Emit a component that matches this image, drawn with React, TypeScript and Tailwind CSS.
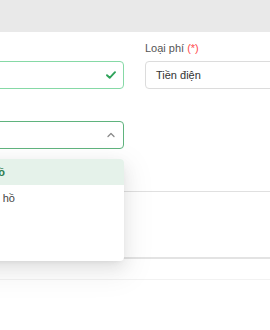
import React from "react";

export default function App() {
  return (
    <div className="w-[270px] h-[330px] overflow-hidden bg-white relative" style={{ fontFamily: '"Liberation Sans", Arial, sans-serif' }}>
      <div className="h-[32px] bg-[#e9e9e9]" />
      <div className="w-[470px] -ml-[68px] pt-[8px]">
        <div className="grid grid-cols-[192px_192px] gap-x-[21px]">
          <div>
            <div className="h-[16px] mb-[5px] flex items-center text-[11px] text-[#555]">
              Số hộ <span className="text-[#ff4d4f] ml-[3px]">(*)</span>
            </div>
            <div className="h-[28px] rounded-[4px] border border-[#86d9a6] bg-white flex items-center justify-between pl-[11px] pr-[7px]">
              <span className="text-[11px] text-[#333]">1</span>
              <svg width="10" height="8" viewBox="0 0 10 8" fill="none">
                <path d="M1 4.2L3.7 6.8L9 1.2" stroke="#2fa35a" strokeWidth="1.9" strokeLinecap="round" strokeLinejoin="round" />
              </svg>
            </div>
          </div>
          <div>
            <div className="h-[16px] mb-[5px] flex items-center text-[11px] text-[#555]">
              Loại phí <span className="text-[#ff4d4f] ml-[3px]">(*)</span>
            </div>
            <div className="h-[28px] rounded-[4px] border border-[#dcdcdc] bg-white flex items-center pl-[10px]">
              <span className="text-[11px] text-[#333]">Tiền điện</span>
            </div>
          </div>
        </div>

        <div className="grid grid-cols-[192px_192px] gap-x-[21px] mt-[11px]">
          <div className="relative">
            <div className="h-[16px] mb-[5px] flex items-center text-[11px] text-[#555]">Đồng hồ</div>
            <div className="h-[28px] rounded-[4px] border border-[#5fb37d] bg-white flex items-center justify-end pr-[8px]">
              <svg width="8" height="6" viewBox="0 0 8 6" fill="none">
                <path d="M1 4.5L4 1.5L7 4.5" stroke="#8a8a8a" strokeWidth="1.3" strokeLinecap="round" strokeLinejoin="round" />
              </svg>
            </div>
            <div className="absolute left-0 right-0 top-[59px] h-[102px] z-10 bg-white rounded-[4px] shadow-[0_6px_16px_0_rgba(0,0,0,0.08),0_3px_6px_-4px_rgba(0,0,0,0.12),0_9px_28px_8px_rgba(0,0,0,0.05)] overflow-hidden">
              <div className="h-[26px] flex items-center pl-[12px] bg-[#e5f2ea] text-[11px] font-bold text-[#2e7d4f]">Có đồng hồ</div>
              <div className="h-[26px] flex items-center pl-[15px] text-[11px] text-[#444]">Khác đồng hồ</div>
            </div>
          </div>
          <div />
        </div>

        <div className="mt-[21px]">
          <div className="h-[16px] mb-[5px] flex items-center text-[11px] text-[#555]">Ghi chú</div>
          <div className="h-[68px] rounded-[4px] border border-[#e0e0e0] border-b-2 border-b-[#e3e3e3] bg-white" />
        </div>
        <div className="mt-[20px] border-t border-[#f2f2f2]" />
      </div>
    </div>
  );
}
